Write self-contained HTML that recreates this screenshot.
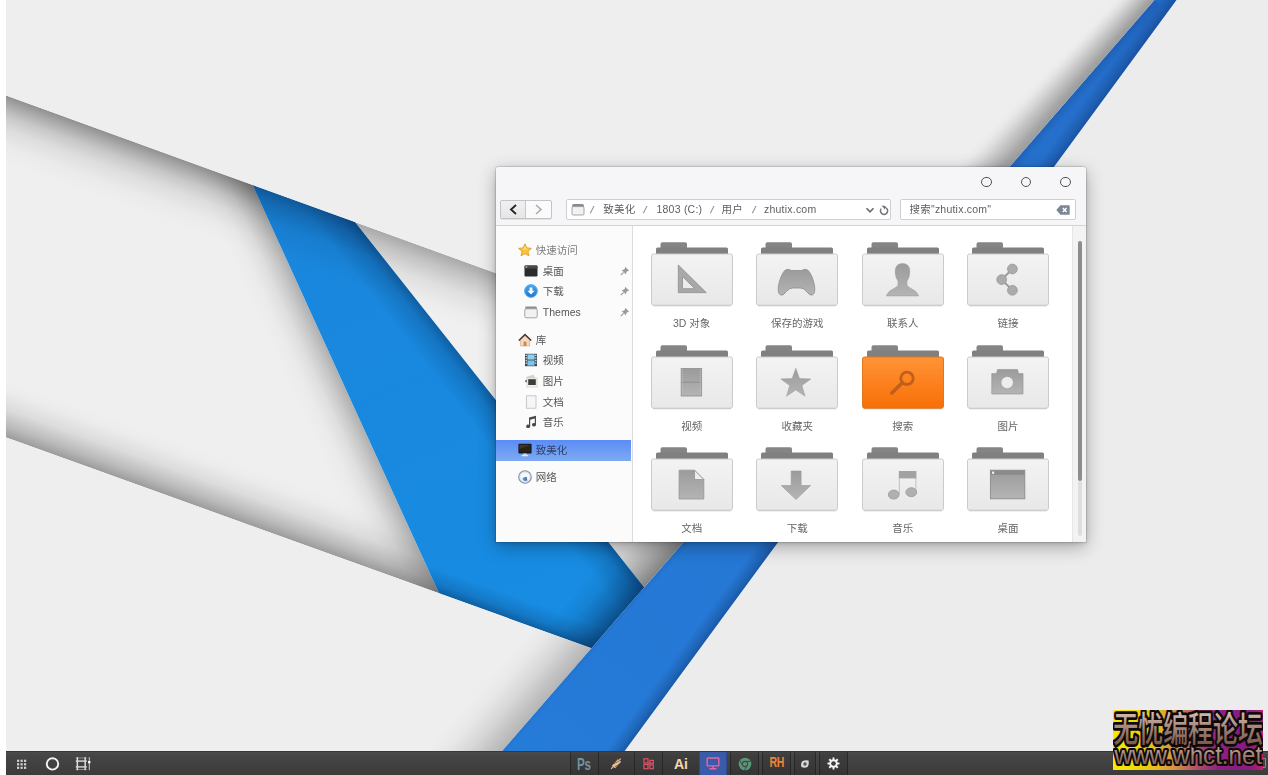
<!DOCTYPE html>
<html lang="zh-CN"><head><meta charset="utf-8"><title>desktop</title>
<style>
*{box-sizing:border-box;margin:0;padding:0}
html,body{width:1268px;height:775px;overflow:hidden;background:#fff}
body{position:relative;font-family:"Liberation Sans","Noto Sans CJK SC",sans-serif;font-size:12px;color:#555}
.wall{position:absolute;left:0;top:0}
.strip{position:absolute;left:0;top:0;width:6px;height:775px;background:#fff}
.abs{position:absolute}
</style></head><body>

<svg class="wall" width="1268" height="775" viewBox="0 0 1268 775"><defs><clipPath id="cM"><polygon points="0.0,93.3 252.5,184.9 439.0,593.3 0.0,435.2"/></clipPath><clipPath id="cB1"><polygon points="252.5,184.9 354.9,222.0 644.2,587.4 591.5,648.2 439.0,593.3"/></clipPath><clipPath id="cR"><polygon points="354.9,222.0 816.4,389.3 644.2,587.4"/></clipPath><clipPath id="cLow"><polygon points="0.0,435.2 591.5,648.2 481.3,775.0 0.0,775.0"/></clipPath><clipPath id="cUp"><polygon points="0.0,0.0 1154.5,0.0 816.4,389.3 0.0,93.3"/></clipPath><clipPath id="cB2"><polygon points="1154.5,0.0 1176.5,0.0 607.0,775.0 481.3,775.0"/></clipPath><linearGradient id="g1" gradientUnits="userSpaceOnUse" x1="-376.1" y1="-43.0" x2="-397.9" y2="17.2"><stop offset="0" stop-color="#000" stop-opacity="0.4"/><stop offset="0.12" stop-color="#000" stop-opacity="0.3"/><stop offset="0.3" stop-color="#000" stop-opacity="0.165"/><stop offset="0.5" stop-color="#000" stop-opacity="0.075"/><stop offset="0.75" stop-color="#000" stop-opacity="0.02"/><stop offset="1" stop-color="#000" stop-opacity="0"/></linearGradient><linearGradient id="g2" gradientUnits="userSpaceOnUse" x1="86.4" y1="-179.0" x2="40.9" y2="-158.2"><stop offset="0" stop-color="#000" stop-opacity="0.27"/><stop offset="0.2" stop-color="#000" stop-opacity="0.17"/><stop offset="0.45" stop-color="#000" stop-opacity="0.07"/><stop offset="0.7" stop-color="#000" stop-opacity="0.02"/><stop offset="1" stop-color="#000" stop-opacity="0"/></linearGradient><linearGradient id="g3" gradientUnits="userSpaceOnUse" x1="-376.4" y1="299.8" x2="-358.1" y2="248.9"><stop offset="0" stop-color="#000" stop-opacity="0.35"/><stop offset="0.2" stop-color="#000" stop-opacity="0.22"/><stop offset="0.5" stop-color="#000" stop-opacity="0.08"/><stop offset="0.8" stop-color="#000" stop-opacity="0.015"/><stop offset="1" stop-color="#000" stop-opacity="0"/></linearGradient><linearGradient id="g4" gradientUnits="userSpaceOnUse" x1="-21.2" y1="85.7" x2="-42.3" y2="143.9"><stop offset="0" stop-color="#000" stop-opacity="0.3"/><stop offset="0.2" stop-color="#000" stop-opacity="0.19"/><stop offset="0.5" stop-color="#000" stop-opacity="0.07"/><stop offset="0.8" stop-color="#000" stop-opacity="0.015"/><stop offset="1" stop-color="#000" stop-opacity="0"/></linearGradient><linearGradient id="g5" gradientUnits="userSpaceOnUse" x1="1078.7" y1="87.3" x2="1033.4" y2="47.9"><stop offset="0" stop-color="#000" stop-opacity="0.45"/><stop offset="0.25" stop-color="#000" stop-opacity="0.3"/><stop offset="0.6" stop-color="#000" stop-opacity="0.12"/><stop offset="1" stop-color="#000" stop-opacity="0"/></linearGradient><linearGradient id="b1" gradientUnits="userSpaceOnUse" x1="300" y1="200" x2="500" y2="640"><stop offset="0" stop-color="#1a86dc"/><stop offset="1" stop-color="#178ce2"/></linearGradient><linearGradient id="g6" gradientUnits="userSpaceOnUse" x1="-123.6" y1="48.5" x2="-144.0" y2="104.9"><stop offset="0" stop-color="#052a55" stop-opacity="0.5"/><stop offset="0.2" stop-color="#052a55" stop-opacity="0.3"/><stop offset="0.5" stop-color="#052a55" stop-opacity="0.1"/><stop offset="1" stop-color="#052a55" stop-opacity="0"/></linearGradient><linearGradient id="g7" gradientUnits="userSpaceOnUse" x1="106.6" y1="-91.6" x2="81.5" y2="-71.8"><stop offset="0" stop-color="#052a55" stop-opacity="0.42"/><stop offset="0.3" stop-color="#052a55" stop-opacity="0.2"/><stop offset="1" stop-color="#052a55" stop-opacity="0"/></linearGradient><linearGradient id="g8" gradientUnits="userSpaceOnUse" x1="62.6" y1="457.8" x2="70.8" y2="435.2"><stop offset="0" stop-color="#052a55" stop-opacity="0.5"/><stop offset="0.4" stop-color="#052a55" stop-opacity="0.2"/><stop offset="1" stop-color="#052a55" stop-opacity="0"/></linearGradient><linearGradient id="g9" gradientUnits="userSpaceOnUse" x1="329.2" y1="950.1" x2="292.9" y2="918.7"><stop offset="0" stop-color="#052a55" stop-opacity="0.62"/><stop offset="0.3" stop-color="#052a55" stop-opacity="0.34"/><stop offset="0.65" stop-color="#052a55" stop-opacity="0.1"/><stop offset="1" stop-color="#052a55" stop-opacity="0"/></linearGradient><linearGradient id="g10" gradientUnits="userSpaceOnUse" x1="853.8" y1="346.2" x2="810.0" y2="308.2"><stop offset="0" stop-color="#000" stop-opacity="0.24"/><stop offset="0.2" stop-color="#000" stop-opacity="0.18"/><stop offset="0.45" stop-color="#000" stop-opacity="0.095"/><stop offset="0.75" stop-color="#000" stop-opacity="0.025"/><stop offset="1" stop-color="#000" stop-opacity="0"/></linearGradient><linearGradient id="b2" gradientUnits="userSpaceOnUse" x1="1160" y1="0" x2="560" y2="775"><stop offset="0" stop-color="#246bc8"/><stop offset=".3" stop-color="#2673cf"/><stop offset="1" stop-color="#257bd8"/></linearGradient><linearGradient id="g11" gradientUnits="userSpaceOnUse" x1="1154.5" y1="0.0" x2="1162.0" y2="6.6"><stop offset="0" stop-color="#0a2f66" stop-opacity="0.22"/><stop offset="1" stop-color="#0a2f66" stop-opacity="0"/></linearGradient><linearGradient id="g12" gradientUnits="userSpaceOnUse" x1="1176.5" y1="0.0" x2="1164.4" y2="-8.9"><stop offset="0" stop-color="#0a2f66" stop-opacity="0.42"/><stop offset="0.4" stop-color="#0a2f66" stop-opacity="0.22"/><stop offset="1" stop-color="#0a2f66" stop-opacity="0"/></linearGradient></defs><rect width="1268" height="775" fill="#ececec"/><polygon points="0.0,93.3 252.5,184.9 439.0,593.3 0.0,435.2" fill="#efefef"/><polygon points="-376.1,-43.0 628.6,321.2 606.7,381.3 -397.9,17.2" fill="url(#g1)" clip-path="url(#cM)"/><polygon points="86.4,-179.0 605.1,957.1 559.7,977.9 40.9,-158.2" fill="url(#g2)" clip-path="url(#cM)"/><polygon points="-376.4,299.8 815.3,728.8 833.6,678.0 -358.1,248.9" fill="url(#g3)" clip-path="url(#cM)"/><polygon points="354.9,222.0 816.4,389.3 644.2,587.4" fill="#f0f0f0"/><polygon points="-21.2,85.7 1192.4,525.6 1171.3,583.9 -42.3,143.9" fill="url(#g4)" clip-path="url(#cR)"/><polygon points="1078.7,87.3 381.9,889.4 336.6,850.0 1033.4,47.9" fill="url(#g5)" clip-path="url(#cR)"/><polygon points="252.5,184.9 354.9,222.0 644.2,587.4 591.5,648.2 439.0,593.3" fill="url(#b1)"/><polygon points="-123.6,48.5 731.0,358.3 710.5,414.7 -144.0,104.9" fill="url(#g6)" clip-path="url(#cB1)"/><polygon points="106.6,-91.6 892.5,901.0 867.5,920.9 81.5,-71.8" fill="url(#g7)" clip-path="url(#cB1)"/><polygon points="62.6,457.8 967.8,783.7 975.9,761.1 70.8,435.2" fill="url(#g8)" clip-path="url(#cB1)"/><polygon points="329.2,950.1 906.6,285.4 870.3,254.0 292.9,918.7" fill="url(#g9)" clip-path="url(#cB1)"/><polygon points="0.0,435.2 591.5,648.2 481.3,775.0 0.0,775.0" fill="#eeeeee"/><polygon points="853.8,346.2 219.0,1077.0 175.2,1038.9 810.0,308.2" fill="url(#g10)" clip-path="url(#cLow)"/><polygon points="0.0,0.0 1154.5,0.0 816.4,389.3 0.0,93.3" fill="#eeeeee"/><g clip-path="url(#cUp)"><polygon points="1548.5,-453.5 789.7,420.0 711.6,420.0" fill="#000" fill-opacity="0.0028"/><polygon points="1548.5,-453.5 789.7,420.0 714.9,420.0" fill="#000" fill-opacity="0.0056"/><polygon points="1548.5,-453.5 789.7,420.0 718.1,420.0" fill="#000" fill-opacity="0.0056"/><polygon points="1548.5,-453.5 789.7,420.0 721.4,420.0" fill="#000" fill-opacity="0.0056"/><polygon points="1548.5,-453.5 789.7,420.0 724.6,420.0" fill="#000" fill-opacity="0.0108"/><polygon points="1548.5,-453.5 789.7,420.0 727.9,420.0" fill="#000" fill-opacity="0.0115"/><polygon points="1548.5,-453.5 789.7,420.0 731.1,420.0" fill="#000" fill-opacity="0.0116"/><polygon points="1548.5,-453.5 789.7,420.0 734.4,420.0" fill="#000" fill-opacity="0.0128"/><polygon points="1548.5,-453.5 789.7,420.0 737.6,420.0" fill="#000" fill-opacity="0.0156"/><polygon points="1548.5,-453.5 789.7,420.0 740.9,420.0" fill="#000" fill-opacity="0.0158"/><polygon points="1548.5,-453.5 789.7,420.0 744.2,420.0" fill="#000" fill-opacity="0.0161"/><polygon points="1548.5,-453.5 789.7,420.0 747.4,420.0" fill="#000" fill-opacity="0.0164"/><polygon points="1548.5,-453.5 789.7,420.0 750.7,420.0" fill="#000" fill-opacity="0.0184"/><polygon points="1548.5,-453.5 789.7,420.0 753.9,420.0" fill="#000" fill-opacity="0.0206"/><polygon points="1548.5,-453.5 789.7,420.0 757.2,420.0" fill="#000" fill-opacity="0.0210"/><polygon points="1548.5,-453.5 789.7,420.0 760.4,420.0" fill="#000" fill-opacity="0.0214"/><polygon points="1548.5,-453.5 789.7,420.0 763.7,420.0" fill="#000" fill-opacity="0.0219"/><polygon points="1548.5,-453.5 789.7,420.0 766.9,420.0" fill="#000" fill-opacity="0.0215"/><polygon points="1548.5,-453.5 789.7,420.0 770.2,420.0" fill="#000" fill-opacity="0.0216"/><polygon points="1548.5,-453.5 789.7,420.0 773.4,420.0" fill="#000" fill-opacity="0.0220"/><polygon points="1548.5,-453.5 789.7,420.0 776.7,420.0" fill="#000" fill-opacity="0.0220"/><polygon points="1548.5,-453.5 789.7,420.0 779.9,420.0" fill="#000" fill-opacity="0.0173"/><polygon points="1548.5,-453.5 789.7,420.0 783.2,420.0" fill="#000" fill-opacity="0.0176"/><polygon points="1548.5,-453.5 789.7,420.0 786.4,420.0" fill="#000" fill-opacity="0.0179"/></g><polygon points="1154.5,0.0 1176.5,0.0 607.0,775.0 481.3,775.0" fill="url(#b2)"/><polygon points="1154.5,0.0 481.3,775.0 488.8,781.6 1162.0,6.6" fill="url(#g11)" clip-path="url(#cB2)"/><polygon points="1176.5,0.0 607.0,775.0 595.0,766.1 1164.4,-8.9" fill="url(#g12)" clip-path="url(#cB2)"/></svg>
<style>
.win{position:absolute;left:496px;top:167px;width:590px;height:375px;background:#f6f6f8;border-radius:3px 3px 0 0;box-shadow:0 0 0 1px rgba(0,0,0,.10),0 5px 18px rgba(0,0,0,.30),0 1px 5px rgba(0,0,0,.16);font-size:10.5px;color:#5a5a5a;overflow:hidden;will-change:transform}
.win .tb{position:absolute;left:0;top:0;width:100%;height:59px;background:#f6f6f8;border-bottom:1px solid #d4d4d6}
.ctl{position:absolute;top:9.700px;width:10.600px;height:10.600px;border:1.900px solid #525252;border-radius:50%}
.nav{position:absolute;left:4px;top:33px;width:52px;height:19px;border:1px solid #c4c4c6;border-radius:2px;background:#fafafa;box-shadow:0 1px 0 rgba(0,0,0,.08)}
.nav i{position:absolute;left:0;top:0;width:25px;height:17px;background:linear-gradient(#f0f0f0,#e6e6e6);border-right:1px solid #c8c8c8}
.nav svg{position:absolute;top:3px}
.addr,.srch{position:absolute;top:32px;height:21px;background:#fff;border:1px solid #cfcfd2;border-radius:2px}
.addr{left:70px;width:325px}
.srch{left:404px;width:176px}
.addr span,.srch span{position:absolute;top:0;line-height:19px;white-space:nowrap;color:#5e5e5e;letter-spacing:.22px}
.addr .sl{color:#8e8e8e;font-size:9.500px;font-weight:bold;transform:skewX(-18deg);letter-spacing:0}
.side{position:absolute;left:0;top:59px;width:137px;height:316px;background:#fbfbfb;border-right:1px solid #dcdcdc}
.main{position:absolute;left:137px;top:59px;width:453px;height:316px;background:#fff}
.row{position:absolute;left:0;width:136px;height:20px;line-height:20px;white-space:nowrap;color:#555}
.row.sel{left:0;width:135px;height:20.500px;background:linear-gradient(#5a8cf6,#7daaf2);color:#2d3f63}
.row b{font-weight:normal;position:absolute}
.row svg{position:absolute}
.lbl{position:absolute;width:100px;text-align:center;line-height:14px;color:#666;white-space:nowrap}
.fold{position:absolute}
.sbar{position:absolute;left:576px;top:59px;width:14px;height:316px;background:#f3f3f3;border-left:1px solid #e6e6e6}
.sbar i{position:absolute;left:5px;width:4px;border-radius:2px}
</style>

<div class="win">
<div class="tb">
<div class="ctl" style="left:485.3px"></div>
<div class="ctl" style="left:524.8px"></div>
<div class="ctl" style="left:564.2px"></div>
<div class="nav"><i></i><svg style="left:8px" width="9" height="11" viewBox="0 0 9 11"><path d="M7 1L2 5.5L7 10" fill="none" stroke="#222" stroke-width="1.8"/></svg><svg style="left:33px" width="9" height="11" viewBox="0 0 9 11"><path d="M2 1L7 5.5L2 10" fill="none" stroke="#a8a8a8" stroke-width="1.5"/></svg></div>
<div class="addr">
<svg style="position:absolute;left:4px;top:3px" width="14" height="13" viewBox="0 0 14 13"><path d="M1.5 2.5 Q1.5 1.5 2.5 1.5 H11.5 Q12.5 1.5 12.5 2.5 V4 H1.5Z" fill="#8c8c8c" stroke="#7a7a7a" stroke-width=".8"/><rect x="1" y="3.600" width="12" height="8.400" rx="1.200" fill="#f2f2f2" stroke="#9c9c9c" stroke-width=".900"/></svg>
<span class="sl" style="left:24.0px">/</span>
<span style="left:36.3px">致美化</span>
<span class="sl" style="left:77.0px">/</span>
<span style="left:89.5px">1803 (C:)</span>
<span class="sl" style="left:144.0px">/</span>
<span style="left:154.5px">用户</span>
<span class="sl" style="left:185.5px">/</span>
<span style="left:197.0px">zhutix.com</span>
<svg style="position:absolute;left:298px;top:6px" width="10" height="8" viewBox="0 0 10 8"><path d="M1.500 2.200L5 5.800L8.500 2.200" fill="none" stroke="#6a6a6a" stroke-width="1.600"/></svg>
<svg style="position:absolute;left:311.500px;top:4.500px" width="10" height="11" viewBox="0 0 10 11"><path d="M6.200 2.400A3.600 3.600 0 1 1 2.200 3.600" fill="none" stroke="#747474" stroke-width="1.500"/><path d="M2.600 0.600L6.600 0.900L5.800 4.600Z" fill="#747474"/></svg>
</div>
<div class="srch">
<span style="left:8.5px">搜索"zhutix.com"</span>
<svg style="position:absolute;left:155px;top:5px" width="14" height="10" viewBox="0 0 14 10"><path d="M4.5 0.3H13Q13.7 0.3 13.7 1V9Q13.7 9.7 13 9.7H4.5L0.3 5Z" fill="#7c8694"/><path d="M6.8 3L10.6 7M10.6 3L6.8 7" stroke="#fff" stroke-width="1.4"/></svg>
</div>
</div>
<div class="side">
<div class="row" style="top:14.2px;color:#7c7c7c"><svg style="left:21.5px;top:3px" width="14" height="14" viewBox="0 0 14 14"><path d="M7 0.8L8.9 4.9L13.4 5.4L10 8.4L11 12.9L7 10.6L3 12.9L4 8.4L0.6 5.4L5.1 4.9Z" fill="#f7c23c" stroke="#e0a020" stroke-width=".9" stroke-linejoin="round"/><path d="M7 2.8L8.2 5.6L10.8 5.9L5 7Z" fill="#fde58a" opacity=".8"/></svg><b style="left:39.7px">快速访问</b></div>
<div class="row" style="top:34.7px"><svg style="left:28.3px;top:3px" width="14" height="14" viewBox="0 0 14 14"><rect x="0.5" y="1.5" width="13" height="11" rx="1.2" fill="#2c2c2e"/><rect x="0.5" y="1.5" width="13" height="3" rx="1" fill="#48484a"/><rect x="1.6" y="2.4" width="1.6" height="1.2" fill="#ddd"/></svg><b style="left:46.8px">桌面</b><svg style="left:123.5px;top:5px" width="10" height="10" viewBox="0 0 10 10"><path d="M5.2 0.8L9.2 4.8L7.6 5L6.2 6.4L6 8.4L1.6 4L3.6 3.8L5 2.4Z" fill="#9a9aa0"/><path d="M3.6 6.4L0.8 9.2" stroke="#9a9aa0" stroke-width="1.2"/></svg></div>
<div class="row" style="top:55.2px"><svg style="left:28.3px;top:3px" width="14" height="14" viewBox="0 0 14 14"><defs><linearGradient id="dg" x1="0" y1="0" x2="0" y2="1"><stop offset="0" stop-color="#4aa6f0"/><stop offset="1" stop-color="#1f74c8"/></linearGradient></defs><circle cx="7" cy="7" r="6.4" fill="url(#dg)"/><circle cx="7" cy="7" r="6.4" fill="none" stroke="#5eb0f2" stroke-width="1"/><path d="M5.6 3.4H8.4V6.8H10.6L7 10.6L3.4 6.8H5.6Z" fill="#fff"/></svg><b style="left:46.8px">下载</b><svg style="left:123.5px;top:5px" width="10" height="10" viewBox="0 0 10 10"><path d="M5.2 0.8L9.2 4.8L7.6 5L6.2 6.4L6 8.4L1.6 4L3.6 3.8L5 2.4Z" fill="#9a9aa0"/><path d="M3.6 6.4L0.8 9.2" stroke="#9a9aa0" stroke-width="1.2"/></svg></div>
<div class="row" style="top:75.8px"><svg style="left:28.3px;top:3px" width="14" height="14" viewBox="0 0 14 14"><path d="M1.2 3 Q1.2 1.6 2.4 1.6 H11.6 Q12.8 1.6 12.8 3 V5 H1.2Z" fill="#8e8e8e"/><rect x="0.8" y="3.8" width="12.4" height="9" rx="1.4" fill="#f2f2f2" stroke="#9a9a9a" stroke-width=".9"/></svg><b style="left:46.8px">Themes</b><svg style="left:123.5px;top:5px" width="10" height="10" viewBox="0 0 10 10"><path d="M5.2 0.8L9.2 4.8L7.6 5L6.2 6.4L6 8.4L1.6 4L3.6 3.8L5 2.4Z" fill="#9a9aa0"/><path d="M3.6 6.4L0.8 9.2" stroke="#9a9aa0" stroke-width="1.2"/></svg></div>
<div class="row" style="top:103.5px"><svg style="left:21.5px;top:3px" width="14" height="14" viewBox="0 0 14 14"><path d="M7 1L13.4 7.2H11.6V13H2.4V7.2H0.6Z" fill="#f3d9c2" stroke="#c9a284" stroke-width=".6"/><path d="M7 0.6L13.6 7L12.6 8L7 2.8L1.4 8L0.4 7Z" fill="#4a3a32"/><rect x="5.6" y="8.6" width="2.8" height="4.4" fill="#c98a3c"/></svg><b style="left:39.7px">库</b></div>
<div class="row" style="top:124.0px"><svg style="left:28.3px;top:3px" width="14" height="14" viewBox="0 0 14 14"><rect x="1" y="0.8" width="12" height="12.4" fill="#3a4652"/><rect x="3.4" y="1.4" width="7.2" height="5.2" fill="#8fd0ee"/><rect x="3.4" y="7.4" width="7.2" height="5.2" fill="#7fc4e6"/><g fill="#e8eef2"><rect x="1.6" y="1.6" width="1.2" height="1.4"/><rect x="1.6" y="4.2" width="1.2" height="1.4"/><rect x="1.6" y="6.8" width="1.2" height="1.4"/><rect x="1.6" y="9.4" width="1.2" height="1.4"/><rect x="11.2" y="1.6" width="1.2" height="1.4"/><rect x="11.2" y="4.2" width="1.2" height="1.4"/><rect x="11.2" y="6.8" width="1.2" height="1.4"/><rect x="11.2" y="9.4" width="1.2" height="1.4"/></g></svg><b style="left:46.8px">视频</b></div>
<div class="row" style="top:145.3px"><svg style="left:28.3px;top:3px" width="14" height="14" viewBox="0 0 14 14"><path d="M2.6 3.2L9.4 1.2L11 4.4L4 6Z" fill="#d8d8d8" stroke="#bbb" stroke-width=".5"/><rect x="3" y="4" width="10" height="9" fill="#f4f4f0" stroke="#c8c8c0" stroke-width=".6"/><rect x="4.2" y="5.2" width="7.6" height="5.8" fill="#3c3f38"/><path d="M1 6.4L3 5.4V8.6L1 7.8Z" fill="#7a7a72"/></svg><b style="left:46.8px">图片</b></div>
<div class="row" style="top:165.8px"><svg style="left:28.3px;top:3px" width="14" height="14" viewBox="0 0 14 14"><rect x="2.4" y="0.8" width="9.6" height="12.4" fill="#f6f6f6" stroke="#c4c4c4" stroke-width=".9"/></svg><b style="left:46.8px">文档</b></div>
<div class="row" style="top:186.3px"><svg style="left:28.3px;top:3px" width="14" height="14" viewBox="0 0 14 14"><path d="M5 2.4L12 0.8V9.6A2 1.7 0 1 1 10.8 8.2V3.6L6.2 4.7V11.2A2 1.7 0 1 1 5 9.8Z" fill="#4a4a4a"/></svg><b style="left:46.8px">音乐</b></div>
<div class="row sel" style="top:214.4px"><svg style="left:21.5px;top:3px" width="14" height="14" viewBox="0 0 14 14"><rect x="0.4" y="0.8" width="13.2" height="9.6" rx="1" fill="#16181c"/><rect x="1.4" y="1.8" width="11.2" height="7.2" fill="#2a2218"/><path d="M1.4 1.8H12.6L1.4 6Z" fill="#4c4030" opacity=".7"/><path d="M5.4 10.4H8.6L9 12H5Z" fill="#cfd3da"/><rect x="3.6" y="12" width="6.8" height="1.2" rx=".5" fill="#e4e6ea"/></svg><b style="left:39.7px">致美化</b></div>
<div class="row" style="top:241.3px"><svg style="left:21.5px;top:3px" width="14" height="14" viewBox="0 0 14 14"><circle cx="7" cy="7" r="6.3" fill="#dfe6ee" stroke="#8493a6" stroke-width="1.1"/><path d="M3 4.2Q7 2 11 4.2Q12 7 10.6 10Q7 12 3.4 10Q2 7 3 4.2Z" fill="#f6f8fa"/><path d="M5 8L8.6 6.8L9.4 10.4L6.6 11Z" fill="#3b6ea8"/><circle cx="6.2" cy="9" r="1.6" fill="#5b8fc8"/></svg><b style="left:39.7px">网络</b></div>
</div>
<div class="main">
<svg width="0" height="0" style="position:absolute"><defs><linearGradient id="gg" x1="0" y1="0" x2="0" y2="1"><stop offset="0" stop-color="#9b9b9b"/><stop offset="1" stop-color="#b4b4b4"/></linearGradient><linearGradient id="fb" x1="0" y1="0" x2="0" y2="1"><stop offset="0" stop-color="#f3f3f4"/><stop offset="1" stop-color="#e8e8e9"/></linearGradient><linearGradient id="fo" x1="0" y1="0" x2="0" y2="1"><stop offset="0" stop-color="#ff9436"/><stop offset="1" stop-color="#f86f08"/></linearGradient></defs></svg>
<svg class="fold" style="left:17.7px;top:15.8px" width="82" height="66" viewBox="0 0 82 66"><path d="M9.5 2 Q9.5 0.2 11.3 0.2 H34.2 Q36 0.2 36 2 V7 H9.5Z" fill="#858585"/><path d="M5 7 Q5 5.400 6.600 5.400 H75.4 Q77 5.400 77 7 V13 H5Z" fill="#808080"/><g transform="translate(0,12)"><rect x="0.5" y="0" width="81" height="51.200" rx="2" fill="url(#fb)" stroke="#cbcbcd" stroke-width="1"/><path d="M2 52H80" stroke="#000" stroke-opacity=".12" stroke-width="1"/><path d="M27.300 11L27.300 38.600L55.200 38.600Z" fill="#a8a8a8" stroke="#949494" stroke-width=".9"/><path d="M31.500 22.500L31.500 34.700L43.800 34.700Z" fill="#ececed" stroke="#949494" stroke-width=".9"/></g></svg>
<div class="lbl" style="left:8.7px;top:89.9px">3D 对象</div>
<svg class="fold" style="left:123.2px;top:15.8px" width="82" height="66" viewBox="0 0 82 66"><path d="M9.5 2 Q9.5 0.2 11.3 0.2 H34.2 Q36 0.2 36 2 V7 H9.5Z" fill="#858585"/><path d="M5 7 Q5 5.400 6.600 5.400 H75.4 Q77 5.400 77 7 V13 H5Z" fill="#808080"/><g transform="translate(0,12)"><rect x="0.5" y="0" width="81" height="51.200" rx="2" fill="url(#fb)" stroke="#cbcbcd" stroke-width="1"/><path d="M2 52H80" stroke="#000" stroke-opacity=".12" stroke-width="1"/><path transform="translate(40.500,0) scale(1.060,1) translate(-40.500,0)" d="M30 16Q33 14.500 35.500 16.500H45.500Q48 14.500 51 16Q55 19.500 57.500 31.500Q58.500 39.500 55.500 41Q53 42 50 37.500Q47.500 34 44 34H37Q33.500 34 31 37.500Q28 42 25.500 41Q22.500 39.500 23.500 31.500Q26 19.500 30 16Z" fill="url(#gg)" stroke="#8e8e8e" stroke-width=".8"/></g></svg>
<div class="lbl" style="left:114.2px;top:89.9px">保存的游戏</div>
<svg class="fold" style="left:228.7px;top:15.8px" width="82" height="66" viewBox="0 0 82 66"><path d="M9.5 2 Q9.5 0.2 11.3 0.2 H34.2 Q36 0.2 36 2 V7 H9.5Z" fill="#858585"/><path d="M5 7 Q5 5.400 6.600 5.400 H75.4 Q77 5.400 77 7 V13 H5Z" fill="#808080"/><g transform="translate(0,12)"><rect x="0.5" y="0" width="81" height="51.200" rx="2" fill="url(#fb)" stroke="#cbcbcd" stroke-width="1"/><path d="M2 52H80" stroke="#000" stroke-opacity=".12" stroke-width="1"/><path d="M40.500 9.500Q47.800 9.500 47.800 17.500Q47.800 23.500 45 27V31Q45.200 32.500 48.200 34Q55.200 37 56.700 42H24.300Q25.800 37 32.800 34Q35.800 32.500 36 31V27Q33.200 23.500 33.200 17.500Q33.200 9.500 40.500 9.500Z" fill="url(#gg)" stroke="#999" stroke-width=".5"/></g></svg>
<div class="lbl" style="left:219.7px;top:89.9px">联系人</div>
<svg class="fold" style="left:334.0px;top:15.8px" width="82" height="66" viewBox="0 0 82 66"><path d="M9.5 2 Q9.5 0.2 11.3 0.2 H34.2 Q36 0.2 36 2 V7 H9.5Z" fill="#858585"/><path d="M5 7 Q5 5.400 6.600 5.400 H75.4 Q77 5.400 77 7 V13 H5Z" fill="#808080"/><g transform="translate(0,12)"><rect x="0.5" y="0" width="81" height="51.200" rx="2" fill="url(#fb)" stroke="#cbcbcd" stroke-width="1"/><path d="M2 52H80" stroke="#000" stroke-opacity=".12" stroke-width="1"/><path d="M45.400 15L34.700 25.600L45.400 36.300" fill="none" stroke="#9c9c9c" stroke-width="2"/><circle cx="45.400" cy="15" r="4.900" fill="#ababab" stroke="#989898" stroke-width=".8"/><circle cx="34.700" cy="25.600" r="4.900" fill="#ababab" stroke="#989898" stroke-width=".8"/><circle cx="45.400" cy="36.300" r="4.900" fill="#ababab" stroke="#989898" stroke-width=".8"/></g></svg>
<div class="lbl" style="left:325.0px;top:89.9px">链接</div>
<svg class="fold" style="left:17.7px;top:118.8px" width="82" height="66" viewBox="0 0 82 66"><path d="M9.5 2 Q9.5 0.2 11.3 0.2 H34.2 Q36 0.2 36 2 V7 H9.5Z" fill="#858585"/><path d="M5 7 Q5 5.400 6.600 5.400 H75.4 Q77 5.400 77 7 V13 H5Z" fill="#808080"/><g transform="translate(0,12)"><rect x="0.5" y="0" width="81" height="51.200" rx="2" fill="url(#fb)" stroke="#cbcbcd" stroke-width="1"/><path d="M2 52H80" stroke="#000" stroke-opacity=".12" stroke-width="1"/><rect x="30.200" y="11.500" width="20.400" height="27.500" fill="url(#gg)" stroke="#949494" stroke-width=".9"/><path d="M30.200 25.200H50.600" stroke="#8c8c8c" stroke-width=".9"/><path d="M31.400 12V38.500M49.400 12V38.500" stroke="#c4c4c4" stroke-width=".9" stroke-dasharray="1.200 1.200"/></g></svg>
<div class="lbl" style="left:8.7px;top:192.6px">视频</div>
<svg class="fold" style="left:123.2px;top:118.8px" width="82" height="66" viewBox="0 0 82 66"><path d="M9.5 2 Q9.5 0.2 11.3 0.2 H34.2 Q36 0.2 36 2 V7 H9.5Z" fill="#858585"/><path d="M5 7 Q5 5.400 6.600 5.400 H75.4 Q77 5.400 77 7 V13 H5Z" fill="#808080"/><g transform="translate(0,12)"><rect x="0.5" y="0" width="81" height="51.200" rx="2" fill="url(#fb)" stroke="#cbcbcd" stroke-width="1"/><path d="M2 52H80" stroke="#000" stroke-opacity=".12" stroke-width="1"/><path d="M39.800 11.300L43.500 21.600L54.800 21.900L45.900 28.600L49.100 39.200L39.800 32.900L30.500 39.200L33.700 28.600L24.800 21.900L36.100 21.600Z" fill="url(#gg)" stroke="#999" stroke-width=".5"/></g></svg>
<div class="lbl" style="left:114.2px;top:192.6px">收藏夹</div>
<svg class="fold" style="left:228.7px;top:118.8px" width="82" height="66" viewBox="0 0 82 66"><path d="M9.5 2 Q9.5 0.2 11.3 0.2 H34.2 Q36 0.2 36 2 V7 H9.5Z" fill="#858585"/><path d="M5 7 Q5 5.400 6.600 5.400 H75.4 Q77 5.400 77 7 V13 H5Z" fill="#808080"/><g transform="translate(0,12)"><rect x="0.5" y="0" width="81" height="51.200" rx="2" fill="url(#fo)" stroke="#e0761e" stroke-width="1"/><path d="M2 52H80" stroke="#000" stroke-opacity=".12" stroke-width="1"/><circle cx="45" cy="21.300" r="6.200" fill="none" stroke="#c25f18" stroke-width="2.900"/><path d="M40.300 25.800L29.800 36" stroke="#c25f18" stroke-width="3.600" stroke-linecap="round"/></g></svg>
<div class="lbl" style="left:219.7px;top:192.6px">搜索</div>
<svg class="fold" style="left:334.0px;top:118.8px" width="82" height="66" viewBox="0 0 82 66"><path d="M9.5 2 Q9.5 0.2 11.3 0.2 H34.2 Q36 0.2 36 2 V7 H9.5Z" fill="#858585"/><path d="M5 7 Q5 5.400 6.600 5.400 H75.4 Q77 5.400 77 7 V13 H5Z" fill="#808080"/><g transform="translate(0,12)"><rect x="0.5" y="0" width="81" height="51.200" rx="2" fill="url(#fb)" stroke="#cbcbcd" stroke-width="1"/><path d="M2 52H80" stroke="#000" stroke-opacity=".12" stroke-width="1"/><path d="M24.800 16.600H29.500L30.500 12.600H50.500L51.500 16.600H56V37H24.800Z" fill="url(#gg)" stroke="#969696" stroke-width=".7"/><circle cx="40.200" cy="25.500" r="5.800" fill="#ededee"/></g></svg>
<div class="lbl" style="left:325.0px;top:192.6px">图片</div>
<svg class="fold" style="left:17.7px;top:221.3px" width="82" height="66" viewBox="0 0 82 66"><path d="M9.5 2 Q9.5 0.2 11.3 0.2 H34.2 Q36 0.2 36 2 V7 H9.5Z" fill="#858585"/><path d="M5 7 Q5 5.400 6.600 5.400 H75.4 Q77 5.400 77 7 V13 H5Z" fill="#808080"/><g transform="translate(0,12)"><rect x="0.5" y="0" width="81" height="51.200" rx="2" fill="url(#fb)" stroke="#cbcbcd" stroke-width="1"/><path d="M2 52H80" stroke="#000" stroke-opacity=".12" stroke-width="1"/><path d="M28.100 11.200H43.500L52.800 20.500V40H28.100Z" fill="url(#gg)" stroke="#949494" stroke-width=".8"/><path d="M43.500 11.200V20.500H52.800Z" fill="#ededee" stroke="#949494" stroke-width=".8"/></g></svg>
<div class="lbl" style="left:8.7px;top:295.3px">文档</div>
<svg class="fold" style="left:123.2px;top:221.3px" width="82" height="66" viewBox="0 0 82 66"><path d="M9.5 2 Q9.5 0.2 11.3 0.2 H34.2 Q36 0.2 36 2 V7 H9.5Z" fill="#858585"/><path d="M5 7 Q5 5.400 6.600 5.400 H75.4 Q77 5.400 77 7 V13 H5Z" fill="#808080"/><g transform="translate(0,12)"><rect x="0.5" y="0" width="81" height="51.200" rx="2" fill="url(#fb)" stroke="#cbcbcd" stroke-width="1"/><path d="M2 52H80" stroke="#000" stroke-opacity=".12" stroke-width="1"/><path d="M35.200 12H45.100V26.500H54.600L40 40.600L25.200 26.500H35.200Z" fill="url(#gg)" stroke="#999" stroke-width=".6"/></g></svg>
<div class="lbl" style="left:114.2px;top:295.3px">下载</div>
<svg class="fold" style="left:228.7px;top:221.3px" width="82" height="66" viewBox="0 0 82 66"><path d="M9.5 2 Q9.5 0.2 11.3 0.2 H34.2 Q36 0.2 36 2 V7 H9.5Z" fill="#858585"/><path d="M5 7 Q5 5.400 6.600 5.400 H75.4 Q77 5.400 77 7 V13 H5Z" fill="#808080"/><g transform="translate(0,12)"><rect x="0.5" y="0" width="81" height="51.200" rx="2" fill="url(#fb)" stroke="#cbcbcd" stroke-width="1"/><path d="M2 52H80" stroke="#000" stroke-opacity=".12" stroke-width="1"/><rect x="36.800" y="12" width="17.600" height="7.400" fill="#a2a2a2"/><path d="M37.300 19V35M53.900 19V32.500" stroke="#c0c0c0" stroke-width="1"/><ellipse cx="31.700" cy="35.600" rx="5.400" ry="4.500" fill="#b0b0b0" stroke="#9a9a9a" stroke-width=".8"/><ellipse cx="49.300" cy="33.200" rx="5.400" ry="4.500" fill="#b0b0b0" stroke="#9a9a9a" stroke-width=".8"/></g></svg>
<div class="lbl" style="left:219.7px;top:295.3px">音乐</div>
<svg class="fold" style="left:334.0px;top:221.3px" width="82" height="66" viewBox="0 0 82 66"><path d="M9.5 2 Q9.5 0.2 11.3 0.2 H34.2 Q36 0.2 36 2 V7 H9.5Z" fill="#858585"/><path d="M5 7 Q5 5.400 6.600 5.400 H75.4 Q77 5.400 77 7 V13 H5Z" fill="#808080"/><g transform="translate(0,12)"><rect x="0.5" y="0" width="81" height="51.200" rx="2" fill="url(#fb)" stroke="#cbcbcd" stroke-width="1"/><path d="M2 52H80" stroke="#000" stroke-opacity=".12" stroke-width="1"/><rect x="23.400" y="11.200" width="34.400" height="28.600" fill="url(#gg)" stroke="#8c8c8c" stroke-width=".9"/><rect x="23.800" y="11.600" width="33.600" height="4.200" fill="#8a8a8a"/><rect x="25" y="12.600" width="2.200" height="2.200" fill="#f4f4f4"/></g></svg>
<div class="lbl" style="left:325.0px;top:295.3px">桌面</div>
</div>
<div class="sbar"><i style="top:15px;height:240px;background:#8d8d8d"></i><i style="top:255px;height:55px;background:#dedede"></i></div>
</div>
<style>
.task{position:absolute;left:6px;top:751px;width:1262px;height:24px;background:linear-gradient(#2f2f2f 0,#4a4a4a 1.5px,#454545 5px,#3b3b3b 100%)}
.tbtn{position:absolute;top:1px;height:23px;background:rgba(0,0,0,.10);border-left:1px solid rgba(0,0,0,.32);border-right:1px solid rgba(0,0,0,.32);text-align:center;line-height:23px;font-weight:bold;font-size:13px}
.tbtn svg{position:absolute;left:50%;top:50%}
</style>
<div class="task">
<div class="abs" style="left:1251px;top:7px;width:9px;height:10px;border:1.500px solid #8c8c8c;border-radius:1px"></div>
<svg class="abs" style="left:10px;top:8px" width="12" height="12" viewBox="0 0 12 12" fill="#d2d2d2"><rect x="1" y="0.7" width="2.200" height="2.200"/><rect x="4.500" y="0.7" width="2.200" height="2.200"/><rect x="8" y="0.7" width="2.200" height="2.200"/><rect x="1" y="4.200" width="2.200" height="2.200"/><rect x="4.500" y="4.200" width="2.200" height="2.200"/><rect x="8" y="4.200" width="2.200" height="2.200"/><rect x="1" y="7.700" width="2.200" height="2.200"/><rect x="4.500" y="7.700" width="2.200" height="2.200"/><rect x="8" y="7.700" width="2.200" height="2.200"/></svg>
<svg class="abs" style="left:38px;top:5px" width="17" height="17" viewBox="0 0 17 17"><circle cx="8.500" cy="7.900" r="5.700" fill="none" stroke="#f2f2f2" stroke-width="1.900"/></svg>
<svg class="abs" style="left:69px;top:5px" width="18" height="16" viewBox="0 0 18 16" fill="#dcdcdc"><rect x="1.600" y="1.200" width="1.500" height="13"/><rect x="9.400" y="1.200" width="1.500" height="13"/><rect x="0.800" y="4.400" width="11" height="1.400"/><rect x="0.800" y="10.200" width="11" height="1.400"/><rect x="0.800" y="1.600" width="11" height=".8" opacity=".6"/><rect x="0.800" y="13.200" width="11" height=".8" opacity=".6"/><rect x="13.800" y="1.200" width=".9" height="13"/><rect x="13.100" y="5" width="2.300" height="2.300" fill="#fff"/></svg>
<div class="tbtn" style="left:564.0px;width:28.6px;color:#7592a3;font-size:13.500px;letter-spacing:-.3px"><span style="display:inline-block;transform:scale(.86,1.16);transform-origin:50% 50%;position:relative;top:.5px">Ps</span></div>
<div class="tbtn" style="left:592.6px;width:35.8px;border-color:transparent;"><svg style="margin:-6.500px 0 0 -6.500px" width="13" height="13" viewBox="0 0 14 14"><path d="M2 9.500L8.500 2.500L12 5L5.500 12Z" fill="#eec08e"/><path d="M1.200 12.800L11.500 1.800" stroke="#eec08e" stroke-width="1.300"/><path d="M3.500 7.500L10.500 4M5 10.500L12 7" stroke="#4a4038" stroke-width=".7"/></svg></div>
<div class="tbtn" style="left:628.4px;width:28.8px;"><svg style="margin:-5.500px 0 0 -5.500px" width="11.500" height="11.500" viewBox="0 0 12 12" fill="none" stroke="#dc5064" stroke-width="1.300"><rect x="1" y="0.800" width="4.200" height="4.400"/><rect x="1" y="6.800" width="4.200" height="4.400"/><rect x="7.200" y="2.500" width="3.600" height="3"/><rect x="7.200" y="7.200" width="3.600" height="4"/><path d="M5.200 6H7.200"/></svg></div>
<div class="tbtn" style="left:657.2px;width:35.5px;border-color:transparent;color:#f6d9ae;font-size:14px"><span style="display:inline-block;transform:scale(1,1.1);transform-origin:50% 50%;position:relative;top:1px">Ai</span></div>
<div class="tbtn" style="left:692.7px;width:28.3px;background:#3b5ba8;border-color:#2c4a92"><svg style="margin:-6.500px 0 0 -7px" width="14" height="13" viewBox="0 0 15 14"><rect x="1.200" y="1" width="12.600" height="8.600" rx=".8" fill="none" stroke="#e468a4" stroke-width="1.500"/><path d="M7.500 9.600V12M3.800 12.600H11.200" stroke="#e468a4" stroke-width="1.500"/></svg></div>
<div class="tbtn" style="left:724.2px;width:28.8px;"><svg style="margin:-7px 0 0 -7px" width="14" height="14" viewBox="0 0 15 15"><circle cx="7.500" cy="7.500" r="6.800" fill="#5a9678"/><circle cx="7.500" cy="7.500" r="2.800" fill="none" stroke="#3f4a44" stroke-width="1.100"/><path d="M7.500 4.700H13.500M5 8.900L2 3.800M10 8.900L7 14" stroke="#3f4a44" stroke-width="1"/></svg></div>
<div class="tbtn" style="left:756.4px;width:28.2px;color:#ec853a;font-size:12.500px;letter-spacing:-.2px"><span style="display:inline-block;transform:scale(.84,1.1);transform-origin:50% 58%">RH</span></div>
<div class="tbtn" style="left:787.9px;width:22.3px;"><svg style="margin:-5px 0 0 -5px" width="10" height="10" viewBox="0 0 10 10"><path d="M2 2.500Q5 0.500 8.500 1.500Q9.500 5 7.500 8Q4.500 9.500 1.500 8Q0.500 5 2 2.500Z" fill="#d8d8d8"/><circle cx="5" cy="5" r="1.700" fill="#555"/></svg></div>
<div class="tbtn" style="left:813.4px;width:28.8px;"><svg style="margin:-6.500px 0 0 -6.500px" width="13" height="13" viewBox="0 0 14 14"><g fill="#f4f4f4"><rect x="6" y="0.500" width="2" height="13"/><rect x="0.500" y="6" width="13" height="2"/><rect x="6" y="0.500" width="2" height="13" transform="rotate(45 7 7)"/><rect x="6" y="0.500" width="2" height="13" transform="rotate(-45 7 7)"/><circle cx="7" cy="7" r="4.600"/></g><circle cx="7" cy="7" r="2.500" fill="#3e3e3e"/></svg></div>
</div>

<style>
.wm{position:absolute;left:1113px;top:710px;width:150px;height:60px;background:linear-gradient(90deg,#f6ea00 0,#f3e004 10%,#e6bf1e 28%,#cf8a48 43%,#a9466c 58%,#8e2280 70%,#871a84 88%,#9a1c7c 95%,#c41f66 100%);overflow:hidden}
.wm svg{position:absolute;left:0;top:0}
</style>
<div class="wm"><svg width="150" height="60" viewBox="0 0 150 60"><defs><linearGradient id="wg" x1="0" y1="0" x2="0" y2="1"><stop offset="0" stop-color="#dcc6ba"/><stop offset=".45" stop-color="#a5877b"/><stop offset="1" stop-color="#704a40"/></linearGradient></defs>
<g font-family="'Liberation Sans','Noto Sans CJK SC',sans-serif" fill="url(#wg)" stroke="#0e0908" stroke-linejoin="round" paint-order="stroke fill">
<text x="0" y="0" font-size="25" stroke-width="4" transform="translate(1.500,54.300) scale(0.962,1)" textLength="153.500" lengthAdjust="spacingAndGlyphs">www.whct.net</text>
<text x="0" y="0" font-size="25" font-weight="500" stroke-width="4" transform="translate(0.300,31.800) scale(1,1.4)" textLength="149.500" lengthAdjust="spacingAndGlyphs">无忧编程论坛</text>
</g></svg></div>

<div class="strip"></div>
</body></html>
